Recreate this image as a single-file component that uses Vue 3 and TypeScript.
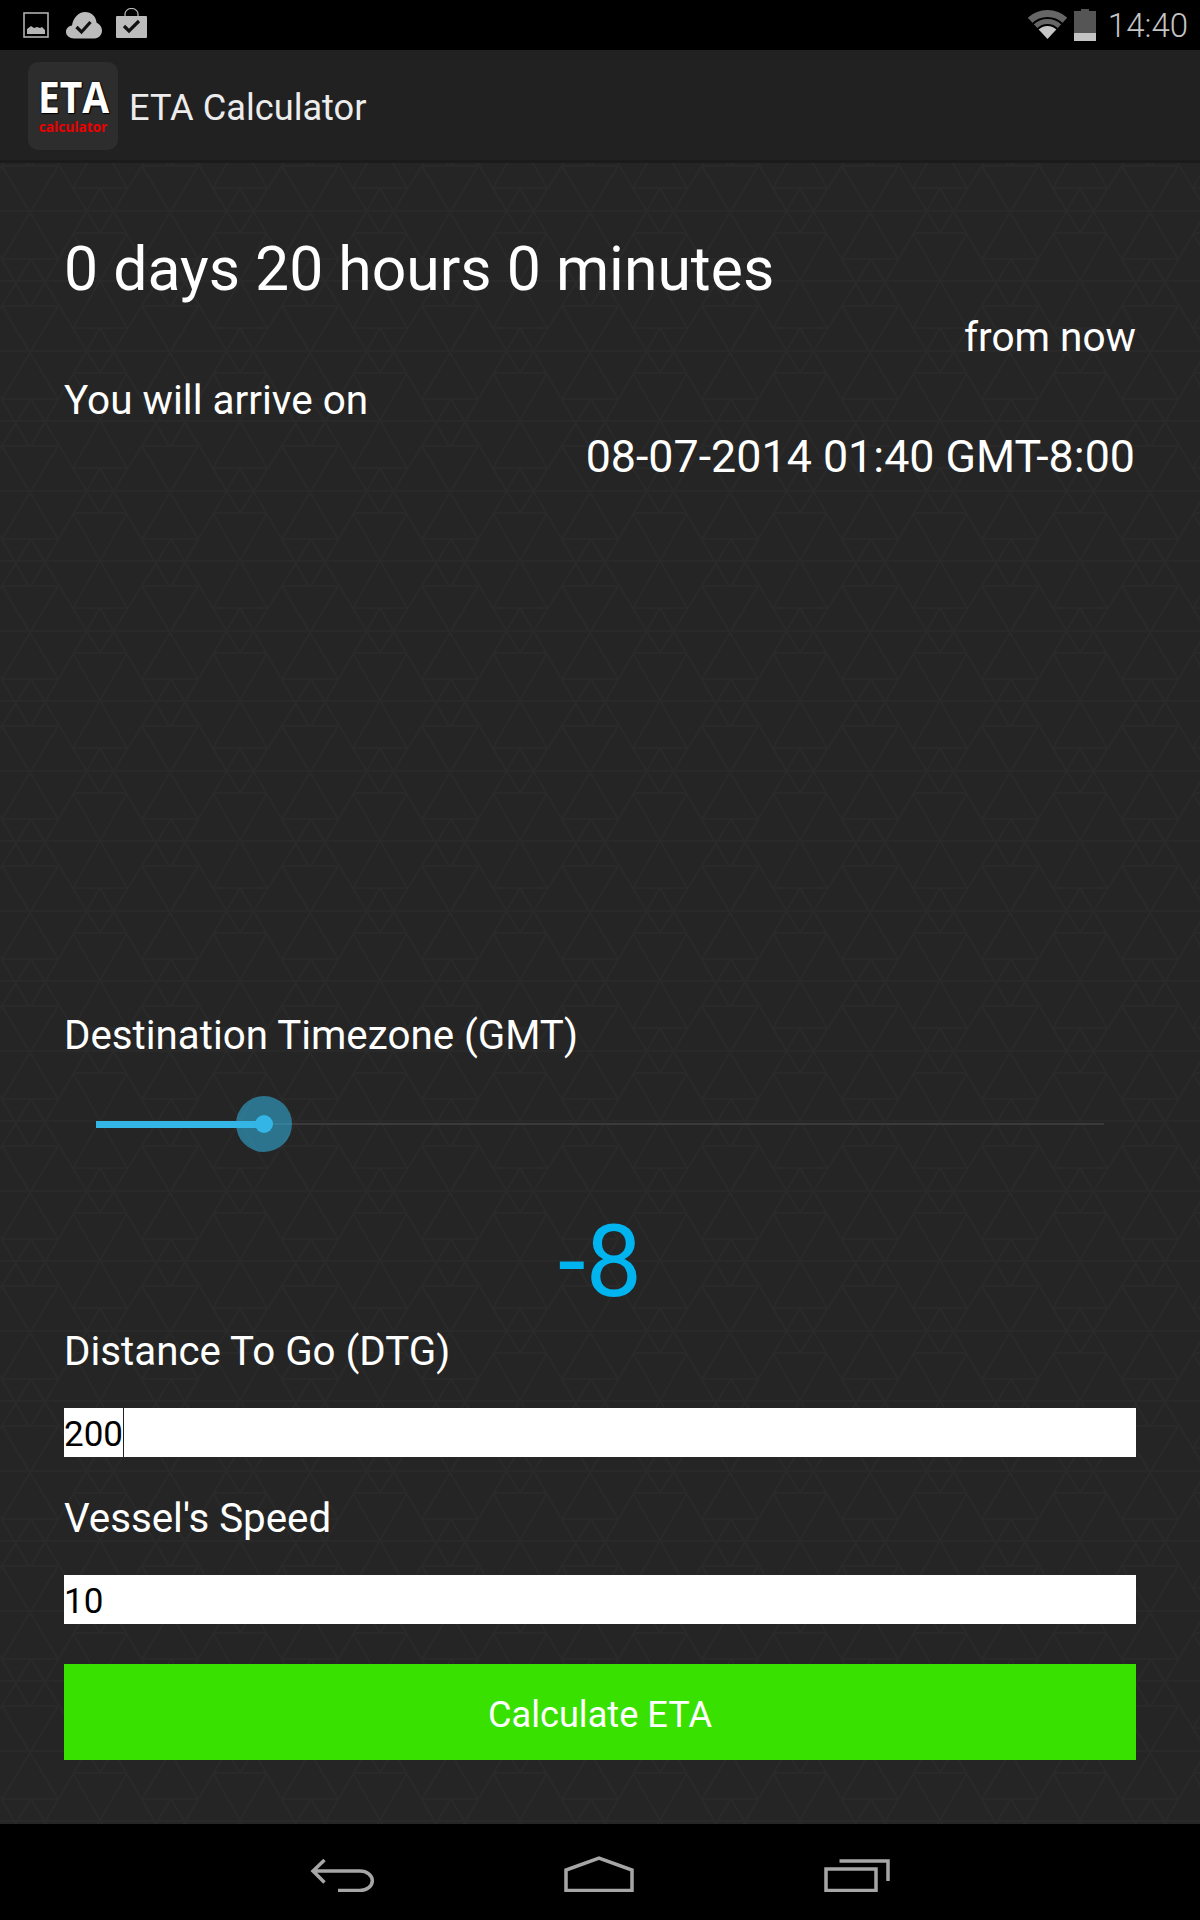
<script setup lang="ts">
const title = 'ETA Calculator'

// background tile, one 140x140 cell of the triangle pattern
type Seg = [number, number, number, number]
const tileSegs: Seg[] = [
  [0, 0, 140, 0],
  [0, 70, 140, 70],
  [73, 22, 127, 22],
  [73, 117, 127, 117],
  [2, 48, 58, 48],
  [2, 95, 58, 95],
  [58, 95, 2, 188],
  [2, 95, 58, 188],
  [127, 22, 73, 117],
  [73, 22, 127, 117],
  [31, 48, 100, 162],
  [171, 48, 100, 162],
  [31, 95, 100, -23],
  [169, 95, 100, -23]
]

const tilePath = tileSegs
  .flatMap(([x1, y1, x2, y2]) =>
    [-140, 0, 140].flatMap((dx) =>
      [-140, 0, 140].map((dy) => `M${x1 + dx} ${y1 + dy}L${x2 + dx} ${y2 + dy}`)
    )
  )
  .join('')
</script>

<template>
  <div class="screen">
    <header class="status-bar">
      <div class="status-left">
        <svg class="ic-picture" width="26" height="26" viewBox="0 0 26 26">
          <rect x="1" y="1" width="24" height="24" fill="none" stroke="#b0b0b0" stroke-width="1.6" />
          <path d="M4 22v-5l4-3 3 2 3-1 3 1 2-1 3 3v4z" fill="#b4b4b4" />
        </svg>
        <svg class="ic-cloud" width="36" height="28" viewBox="0 0 36 28">
          <path d="M8 27.500C3.500 27.500 0 24.500 0 21c0-3.500 2.500-6 6-6.500C7 7 12.500 1 19 1c6.500 0 11 4.500 11.500 10.500 3 1.500 5.500 4.500 5.500 8 0 4-3 8-7.500 8z" fill="#bcbcbc" />
          <path d="M10.500 16l5 5 9-10" fill="none" stroke="#111" stroke-width="3.200" />
        </svg>
        <svg class="ic-bag" width="31" height="30" viewBox="0 0 31 30">
          <path d="M9 9V6a6.500 5.500 0 0 1 13 0v3" fill="none" stroke="#bcbcbc" stroke-width="1.200" />
          <rect y="8" width="31" height="22" rx="1" fill="#bcbcbc" />
          <path d="M8 18l5 5 10-10" fill="none" stroke="#111" stroke-width="3.200" />
        </svg>
      </div>
      <div class="status-right">
        <svg class="ic-wifi" width="39" height="30" viewBox="0 0 39 30">
          <defs>
            <clipPath id="fan"><path d="M19.500 29L-9.300-2H48.300z" /></clipPath>
          </defs>
          <g clip-path="url(#fan)" fill="none">
            <circle cx="19.500" cy="29" r="25.500" stroke="#666" stroke-width="7" />
            <circle cx="19.500" cy="29" r="17.500" stroke="#666" stroke-width="5" />
            <circle cx="19.500" cy="29" r="6.500" stroke="#c6c6c6" stroke-width="13" />
          </g>
        </svg>
        <svg class="ic-battery" width="22" height="32" viewBox="0 0 22 32">
          <path d="M7 0h8v2h7v30H0V2h7z" fill="#555" />
          <rect y="24" width="22" height="8" fill="#c4c4c4" />
        </svg>
        <span class="clock">14:40</span>
      </div>
    </header>

    <div class="action-bar">
      <div class="app-logo">
        <span class="logo-eta">ETA</span>
        <span class="logo-sub">calculator</span>
      </div>
      <span class="app-title">{{ title }}</span>
    </div>

    <main class="content">
      <svg class="pattern" width="100%" height="100%" aria-hidden="true">
        <defs>
          <pattern id="tri" width="140" height="140" patternUnits="userSpaceOnUse" patternTransform="translate(0 48)">
            <path :d="tilePath" fill="none" stroke="#2a2a2a" stroke-width="1.500" />
          </pattern>
        </defs>
        <rect width="100%" height="100%" fill="url(#tri)" />
      </svg>

      <div class="result">
        <div class="duration">0 days 20 hours 0 minutes</div>
        <div class="from-now">from now</div>
        <div class="arrive-label">You will arrive on</div>
        <div class="arrive-date">08-07-2014 01:40 GMT-8:00</div>
      </div>

      <div class="form">
        <div class="field-label">Destination Timezone (GMT)</div>
        <div class="slider">
          <div class="slider-track"></div>
          <div class="slider-fill"></div>
          <div class="slider-halo"></div>
          <div class="slider-thumb"></div>
        </div>
        <div class="tz-value">-8</div>
        <div class="field-label dtg">Distance To Go (DTG)</div>
        <div class="input"><span class="input-text">200</span><span class="caret"></span></div>
        <div class="field-label speed">Vessel's Speed</div>
        <div class="input"><span class="input-text">10</span></div>
        <button class="calc-btn">Calculate ETA</button>
      </div>
    </main>

    <footer class="nav-bar">
      <svg width="64" height="33" viewBox="0 0 64 33">
        <path d="M14.500 1L3 12l11.500 11.500M3 12h47a12 9.500 0 0 1 0 19.500H28" fill="none" stroke="#a6a6a6" stroke-width="3.500" />
      </svg>
      <svg width="70" height="36" viewBox="0 0 70 36">
        <path d="M2 34.500V14L35 2l33 12v20.500z" fill="none" stroke="#a6a6a6" stroke-width="3.500" />
      </svg>
      <svg width="66" height="33" viewBox="0 0 66 33">
        <path d="M15.500 2H64v20" fill="none" stroke="#a6a6a6" stroke-width="3.500" />
        <rect x="2" y="10" width="50" height="21.500" fill="none" stroke="#a6a6a6" stroke-width="3.500" />
      </svg>
    </footer>
  </div>
</template>

<style>
html,
body {
  margin: 0;
  background: #000;
}
</style>

<style scoped>
.screen {
  width: 1200px;
  height: 1920px;
  display: flex;
  flex-direction: column;
  font-family: Roboto, 'Liberation Sans', sans-serif;
  color: #fff;
  background: #000;
  overflow: hidden;
}

.status-bar {
  height: 50px;
  flex: none;
  display: flex;
  justify-content: space-between;
  align-items: center;
  padding: 0 12px 0 23px;
  background: #000;
}

.status-left,
.status-right {
  display: flex;
  align-items: center;
}

.ic-cloud {
  margin-left: 17px;
}

.ic-bag {
  margin-left: 14px;
  margin-bottom: 4px;
}

.ic-battery {
  margin-left: 7px;
}

.clock {
  margin-left: 12px;
  font-size: 33px;
  font-weight: 300;
  color: #c4c4c4;
}

.action-bar {
  height: 113px;
  flex: none;
  display: flex;
  align-items: center;
  padding: 2px 0 0 28px;
  box-sizing: border-box;
  background: #212121;
  border-bottom: 3px solid #1b1b1b;
}

.app-logo {
  width: 90px;
  height: 88px;
  border-radius: 10px;
  background: #2d2d2d;
  display: flex;
  flex-direction: column;
  align-items: center;
  justify-content: center;
  font-family: 'Open Sans', sans-serif;
  font-weight: 700;
}

.logo-eta {
  font-size: 41px;
  line-height: 34px;
  color: #fff;
  text-shadow: 0 0 2px #000, 1px 1px 1px #000;
  transform: scale(0.95, 1.06);
}

.logo-sub {
  margin-top: 7px;
  font-size: 13.700px;
  line-height: 13px;
  color: #ee0000;
}

.app-title {
  margin-left: 11px;
  padding-top: 2px;
  font-size: 36.200px;
  color: #ececec;
}

.content {
  flex: 1;
  position: relative;
  display: flex;
  flex-direction: column;
  justify-content: space-between;
  padding: 0 64px 64px;
  background: #252525;
}

.pattern {
  position: absolute;
  inset: 0;
}

.result,
.form {
  position: relative;
}

.duration {
  margin-top: 71px;
  font-size: 60.700px;
  line-height: 72px;
}

.from-now {
  margin-top: 4px;
  text-align: right;
  font-size: 40.500px;
  line-height: 54px;
}

.arrive-label {
  margin-top: 9px;
  font-size: 40.500px;
  line-height: 54px;
}

.arrive-date {
  margin-top: 1px;
  text-align: right;
  font-size: 44.800px;
  line-height: 58px;
  margin-right: 1px;
}

.field-label {
  font-size: 40.300px;
  line-height: 54px;
  padding-top: 1px;
  margin-bottom: -1px;
}

.slider {
  position: relative;
  height: 60px;
  margin-top: 32px;
}

.slider-track {
  position: absolute;
  left: 32px;
  right: 32px;
  top: 29px;
  height: 2px;
  background: #3a3a3a;
}

.slider-fill {
  position: absolute;
  left: 32px;
  width: 168px;
  top: 27px;
  height: 7px;
  background: #33b5e5;
}

.slider-halo {
  position: absolute;
  left: 172px;
  top: 2px;
  width: 56px;
  height: 56px;
  border-radius: 50%;
  background: rgba(51, 181, 229, 0.55);
}

.slider-thumb {
  position: absolute;
  left: 191px;
  top: 21px;
  width: 18px;
  height: 18px;
  border-radius: 50%;
  background: #33b5e5;
}

.tz-value {
  margin-top: 52px;
  text-align: center;
  font-size: 100px;
  line-height: 112px;
  color: #00b4f0;
}

.dtg {
  margin-top: 6px;
}

.input {
  display: flex;
  align-items: center;
  height: 49px;
  margin-top: 30px;
  background: #fff;
  color: #000;
}

.input-text {
  padding-top: 4px;
  font-size: 35px;
}

.caret {
  width: 1px;
  height: 49px;
  background: #222;
}

.speed {
  margin-top: 34px;
}

.calc-btn {
  display: block;
  width: 100%;
  height: 96px;
  margin-top: 40px;
  padding: 4px 0 0;
  border: none;
  background: #39e100;
  color: #fff;
  font-family: inherit;
  font-size: 36.200px;
}

.nav-bar {
  height: 96px;
  flex: none;
  display: flex;
  justify-content: center;
  align-items: flex-end;
  gap: 190px;
  padding-bottom: 28px;
  box-sizing: border-box;
  background: #000;
}
</style>
